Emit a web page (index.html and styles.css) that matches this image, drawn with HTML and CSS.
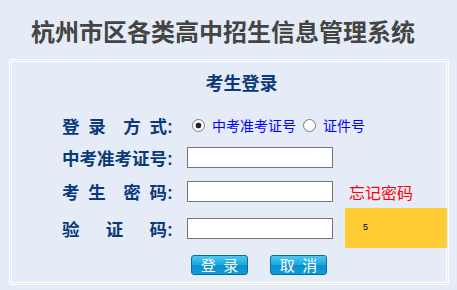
FILE: index.html
```html
<!DOCTYPE html>
<html lang="zh-CN">
<head>
    <meta charset="UTF-8">
    <title>杭州市区各类高中招生信息管理系统</title>
    <link rel="stylesheet" href="styles.css">
</head>
<body>
    <div class="title">杭州市区各类高中招生信息管理系统</div>

    <div class="frame">
        <div class="frame-inner">
            <div class="login-head">考生登录</div>

            <div class="login-form">
                <div class="label">登&ensp;录&ensp;&ensp;方&ensp;式:</div>
                <div class="field wide">
                    <label class="opt"><input type="radio" name="mode" checked>中考准考证号</label>
                    <label class="opt"><input type="radio" name="mode">证件号</label>
                </div>

                <div class="label">中考准考证号:</div>
                <div class="field"><input type="text" class="txt"></div>
                <div class="extra"></div>

                <div class="label">考&ensp;生&ensp;&ensp;密&ensp;码:</div>
                <div class="field"><input type="password" class="txt"></div>
                <div class="extra"><a class="forget" href="#">忘记密码</a></div>

                <div class="label">验&ensp;&ensp;&ensp;证&ensp;&ensp;&ensp;码:</div>
                <div class="field"><input type="text" class="txt"></div>
                <div class="extra"><div class="captcha"><span>5</span></div></div>
            </div>

            <div class="buttons">
                <button class="btn">登&ensp;录</button>
                <button class="btn">取&ensp;消</button>
            </div>
        </div>
    </div>
</body>
</html>
```

FILE: styles.css
```css
body {
    margin: 0;
    background-color: #e5ebf7;
    font-family: "Liberation Sans", "Noto Sans CJK SC", sans-serif;
}

.title {
    padding: 21px 0 0 31px;
    margin-bottom: 14px;
    font-size: 24px;
    line-height: 24px;
    font-weight: bold;
    color: #444;
}

/* double white frame */
.frame {
    margin-left: 9px;
    width: 440px;
    box-sizing: border-box;
    border: 1px solid #fff;
    padding: 1px;
}

.frame-inner {
    border: 1px solid #fff;
    padding: 13px 0 7px 0;
}

.login-head {
    padding-left: 25px;
    text-align: center;
    font-size: 18px;
    line-height: 18px;
    font-weight: bold;
    color: #0a3a7a;
}

.login-form {
    display: grid;
    grid-template-columns: 125px 158px 1fr;
    grid-template-rows: 30px 35px 33px 40px;
    align-items: center;
    margin-top: 17px;
    padding-left: 50px;
}

.label {
    font-size: 17.5px;
    font-weight: bold;
    color: #0a3a7a;
    white-space: nowrap;
}

.field.wide {
    grid-column: span 2;
    display: flex;
    align-items: center;
    padding-left: 5px;
}

.opt {
    display: flex;
    align-items: center;
    gap: 7px;
    margin-right: 7px;
    font-size: 14px;
    color: #0000ff;
}

.opt input {
    appearance: none;
    width: 13px;
    height: 13px;
    margin: 0;
    border: 1px solid #7a7a7a;
    border-radius: 50%;
    background: #fff;
}

.opt input:checked {
    background: radial-gradient(circle, #222 0 2.6px, #fff 3.2px);
}

.txt {
    width: 146px;
    height: 21px;
    box-sizing: border-box;
    margin: 0;
    border: 1px solid #767676;
    border-radius: 0;
    background: #fff;
}

.extra {
    align-self: stretch;
    display: flex;
    align-items: center;
}

.forget {
    padding-left: 4px;
    font-size: 16px;
    color: #ff0000;
    text-decoration: none;
}

.captcha {
    width: 102px;
    height: 40px;
    flex-shrink: 0;
    background-color: #ffcc33;
}

.captcha span {
    display: block;
    padding: 14px 0 0 18px;
    font-size: 9px;
    line-height: 10px;
    color: #000;
}

.buttons {
    display: flex;
    gap: 22px;
    margin-top: 7px;
    padding-left: 179px;
}

.btn {
    width: 57px;
    height: 20px;
    padding: 0;
    border: 1px solid #0b6c9c;
    border-radius: 3px;
    background: linear-gradient(#4cc8f2, #1aa9e0 48%, #0990cc 52%, #0c9ed8);
    color: #fff;
    font-family: "Noto Sans CJK SC", sans-serif;
    font-size: 15px;
    line-height: 18px;
    cursor: pointer;
}
```
